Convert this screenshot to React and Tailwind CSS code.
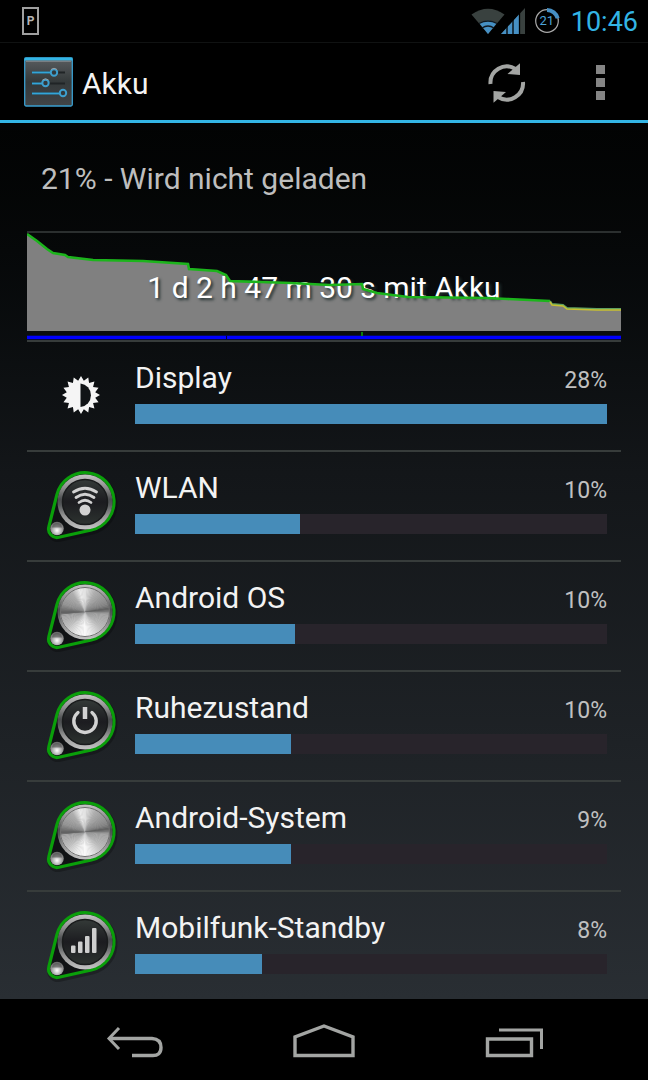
import React from "react";

const consumers = [
  { name: "Display", percent: 28, bar: 100, icon: "display" },
  { name: "WLAN", percent: 10, bar: 35, icon: "wifi" },
  { name: "Android OS", percent: 10, bar: 34, icon: "metal" },
  { name: "Ruhezustand", percent: 10, bar: 33, icon: "power" },
  { name: "Android-System", percent: 9, bar: 33, icon: "metal" },
  { name: "Mobilfunk-Standby", percent: 8, bar: 27, icon: "signal" },
];

const greenLine =
  "0,1 10,8 20,16 26,20 38,22 41,24 66,27 116,28 161,31 162,36 190,38 199,42 203,48 263,50 303,52 335,51 336,56 350,60 381,64 460,65 480,66 523,68";
const yellowLine = "523,68 525,71 536,72 540,75 570,76 594,76";

// brightness of the brushed metal by angle, clockwise from the top
const metalStops = [
  [0, 225],
  [25, 175],
  [70, 135],
  [82, 95],
  [95, 165],
  [135, 190],
  [165, 235],
  [180, 250],
  [200, 235],
  [230, 190],
  [262, 165],
  [266, 90],
  [290, 150],
  [325, 175],
  [345, 235],
  [360, 225],
];

function brightness(angle) {
  const i = metalStops.findIndex(([a]) => a > angle);
  const [a0, b0] = metalStops[i - 1];
  const [a1, b1] = metalStops[i];
  return Math.round(b0 + ((b1 - b0) * (angle - a0)) / (a1 - a0));
}

const wedges = Array.from({ length: 90 }, (_, i) => {
  const from = ((i * 4 - 90) * Math.PI) / 180;
  const to = ((i * 4 - 85) * Math.PI) / 180;
  const point = (t) => `${(38 + 25 * Math.cos(t)).toFixed(2)} ${(32 + 25 * Math.sin(t)).toFixed(2)}`;
  const b = brightness(i * 4 + 1);
  return { d: `M38 32L${point(from)}L${point(to)}Z`, fill: `rgb(${b},${b},${b})` };
});

function Glyph({ kind }) {
  if (kind === "metal") {
    return (
      <g>
        {wedges.map((w) => (
          <path key={w.d} d={w.d} fill={w.fill} />
        ))}
        <circle cx="38" cy="32" r="24.5" fill="none" stroke="#6f6f6f" strokeWidth="1" />
      </g>
    );
  }
  return (
    <g>
      <circle cx="38" cy="32" r="22.5" fill="url(#disc)" stroke="#191b1c" strokeWidth="1.5" />
      {kind === "wifi" && (
        <g fill="none" stroke="#d2d2d2" strokeWidth="2.8" strokeLinecap="round">
          <path d="M26.5 22Q38 14.5 49.5 22" />
          <path d="M29 27.500Q38 21 47 27.500" />
          <path d="M32 32.500Q38 28 44 32.500" />
          <circle cx="38" cy="40" r="5.500" fill="#d2d2d2" stroke="none" />
        </g>
      )}
      {kind === "power" && (
        <g fill="none" stroke="#d2d2d2" strokeWidth="3.400" strokeLinecap="round">
          <path d="M31 22.500A11.200 11.200 0 1 0 45 22.500" />
          <path d="M38 17V29" strokeWidth="4.500" strokeLinecap="butt" />
        </g>
      )}
      {kind === "signal" && (
        <g fill="#cfcfcf">
          <rect x="24" y="35.500" width="4.500" height="7.500" rx="1" />
          <rect x="31" y="31.500" width="4.500" height="11.500" rx="1" />
          <rect x="38" y="26" width="4.500" height="17" rx="1" />
          <rect x="45" y="18" width="4.500" height="25" rx="1" />
        </g>
      )}
    </g>
  );
}

function ConsumerIcon({ kind }) {
  if (kind === "display") {
    const points = Array.from({ length: 32 }, (_, i) => {
      const r = i % 2 === 0 ? 19 : 14.5;
      const t = (i * Math.PI) / 16;
      return `${(34 + r * Math.sin(t)).toFixed(2)},${(35 - r * Math.cos(t)).toFixed(2)}`;
    }).join(" ");
    return (
      <svg viewBox="0 0 68 70" className="h-[70px] w-[68px] shrink-0" aria-hidden="true">
        <polygon points={points} fill="#f5f5f5" />
        <path d="M33.500 23.500A11.500 11.800 0 0 1 33.500 47Z" fill="#111416" />
      </svg>
    );
  }
  return (
    <svg viewBox="0 0 68 70" className="h-[70px] w-[68px] shrink-0 overflow-visible" aria-hidden="true">
      <defs>
        <linearGradient id="ring" x1="0" y1="0" x2="0" y2="1">
          <stop offset="0" stopColor="#c4c4c4" />
          <stop offset="0.25" stopColor="#8c8c8c" />
          <stop offset="0.45" stopColor="#4a4c4e" />
          <stop offset="0.55" stopColor="#55585a" />
          <stop offset="0.75" stopColor="#949494" />
          <stop offset="1" stopColor="#c4c4c4" />
        </linearGradient>
        <linearGradient id="disc" x1="0" y1="0" x2="0" y2="1">
          <stop offset="0" stopColor="#343a38" />
          <stop offset="0.5" stopColor="#1c1c20" />
          <stop offset="1" stopColor="#2d3330" />
        </linearGradient>
        <radialGradient id="rivet" cx="0.5" cy="0.65" r="0.6">
          <stop offset="0" stopColor="#ffffff" />
          <stop offset="0.5" stopColor="#b4b4b4" />
          <stop offset="1" stopColor="#6a6a6a" />
        </radialGradient>
      </defs>
      <path
        d="M9.900 24.600A29 29 0 1 1 44.400 60L11.900 67.300A8.500 8.500 0 0 1 1.800 56.900Z"
        fill="none"
        stroke="#000"
        strokeOpacity="0.25"
        strokeWidth="5"
        transform="translate(1 2)"
      />
      <path
        d="M9.900 24.600A29 29 0 1 1 44.400 60L11.900 67.300A8.500 8.500 0 0 1 1.800 56.900Z"
        fill="#101214"
        stroke="#0a9f0a"
        strokeWidth="3.200"
      />
      <circle cx="38" cy="32" r="27.500" fill="url(#ring)" />
      <circle cx="10" cy="58.500" r="6.800" fill="url(#rivet)" />
      <path d="M5 57.500A5 4.500 0 0 1 15 57.500Z" fill="#3d3d3d" opacity="0.5" />
      <Glyph kind={kind} />
    </svg>
  );
}

function StatusBar() {
  return (
    <div className="flex h-[43px] shrink-0 items-center border-b border-[#101212] pl-[22px] pr-[10px]">
      <div className="flex h-7 w-[17px] items-center justify-center border-2 border-[#a0a0a0] text-xs font-bold text-[#b4b4b4]">
        P
      </div>
      <div className="ml-auto flex items-center">
        <svg viewBox="0 0 34 26" className="h-[26px] w-[34px]" role="img" aria-label="WLAN">
          <path d="M17 26L0.500 6.500Q17 -5 33.500 6.500Z" fill="#39413f" />
          <path d="M17 26L8.500 15.500Q17 9.500 25.500 15.500Z" fill="#4690c4" />
          <path d="M8 15.500Q17 10.500 26 15.500M11 20Q17 16 23 20" fill="none" stroke="#101820" strokeWidth="1.300" />
        </svg>
        <svg viewBox="0 0 24 26" className="-ml-1 h-[26px] w-6" role="img" aria-label="Mobilfunk">
          <path d="M0 26L24 0V26Z" fill="#39413f" />
          <path d="M0 26L18 6.500V26Z" fill="#4690c4" />
          <path d="M6 12V26M12 6V26M18.500 0V26" stroke="#000" strokeWidth="1.300" />
        </svg>
        <div className="ml-2 grid size-7 place-items-center">
          <svg viewBox="0 0 28 28" className="size-7 [grid-area:1/1]" aria-hidden="true">
            <circle cx="14" cy="14" r="11.300" fill="none" stroke="#a8a8a8" strokeWidth="1.200" />
            <path d="M14 3A11 11 0 0 1 24.700 11.300" fill="none" stroke="#4690c4" strokeWidth="4" />
          </svg>
          <span className="text-[13px] text-[#4da3d8] [grid-area:1/1]">21</span>
        </div>
        <span className="ml-[10px] pt-[2px] text-[27px] leading-8 text-[#33b5e5]">10:46</span>
      </div>
    </div>
  );
}

function ActionBar() {
  return (
    <header className="flex h-20 shrink-0 items-center border-b-[3px] border-[#33b5e5] pl-6 pr-[43px]">
      <svg viewBox="0 0 49 50" className="h-[50px] w-[49px]" aria-hidden="true">
        <defs>
          <linearGradient id="tile" x1="0" y1="0" x2="0" y2="1">
            <stop offset="0" stopColor="#5a5d60" />
            <stop offset="0.5" stopColor="#34393a" />
            <stop offset="1" stopColor="#414446" />
          </linearGradient>
        </defs>
        <rect x="0.700" y="1" width="47.600" height="48" rx="1.500" fill="url(#tile)" stroke="#3a9fd0" strokeWidth="1.300" />
        <path d="M0.500 2H48.500" stroke="#33b5e5" strokeWidth="3" />
        <path d="M2 4.200H47" stroke="#8a9296" strokeWidth="1" />
        <path d="M8 15.500H41M8 26.500H41M8 36.500H41" stroke="#202426" strokeWidth="2" />
        <path d="M8 15.500H27M8 26.500H18M8 36.500H36" stroke="#33a5d8" strokeWidth="1.800" />
        <g fill="#33383a" stroke="#3d9fce" strokeWidth="2">
          <circle cx="30" cy="15.500" r="3.200" />
          <circle cx="21.500" cy="26" r="3.200" />
          <circle cx="39" cy="36" r="3.200" />
        </g>
        <path d="M27 12.500Q30 10 33 12.500M18.500 23Q21.500 20.500 24.500 23" fill="none" stroke="#9a9da0" strokeWidth="1" />
      </svg>
      <h1 className="ml-[9px] pt-1 text-[30px] leading-9 text-[#f3f3f3]">Akku</h1>
      <div className="ml-auto flex items-center gap-16 pt-[2px]">
        <button type="button" aria-label="Aktualisieren">
          <svg viewBox="0 0 38 40" className="h-10 w-[38px]">
            <g fill="none" stroke="#a3a5a3" strokeWidth="4">
              <path d="M2.500 21A16.300 16.300 0 0 1 27.500 6" />
              <path d="M35 19A16.300 16.300 0 0 1 10 34" />
            </g>
            <path d="M32 0.300V12L19.500 11Z" fill="#a3a5a3" />
            <path d="M5.500 39.700V28L18 29Z" fill="#a3a5a3" />
          </svg>
        </button>
        <button type="button" aria-label="Weitere Optionen" className="flex flex-col items-end gap-1 pl-1.5">
          <span className="size-[9px] bg-[#858585]" />
          <span className="size-[9px] bg-[#858585]" />
          <span className="size-[9px] bg-[#858585]" />
        </button>
      </div>
    </header>
  );
}

function HistoryChart() {
  return (
    <a href="#history" className="mx-[27px] grid items-center border-t-2 border-[#2b2f2f]">
      <svg viewBox="0 0 594 107" preserveAspectRatio="none" className="h-[107px] w-full [grid-area:1/1]" aria-hidden="true">
        <polygon points={`${greenLine} ${yellowLine} 594,98 0,98`} fill="#808080" />
        <rect x="0" y="102.700" width="594" height="3.500" fill="#0000ff" />
        <rect x="199" y="102.700" width="1" height="3.500" fill="#000040" />
        <rect x="334" y="99" width="2" height="4" fill="#0b7f0b" />
      </svg>
      <span className="pt-[2px] text-center text-[30px] leading-9 text-white [grid-area:1/1] [text-shadow:2px_2px_3px_#223030]">
        1 d 2 h 47 m 30 s mit Akku
      </span>
      <svg viewBox="0 0 594 107" preserveAspectRatio="none" className="h-[107px] w-full [grid-area:1/1]" aria-hidden="true">
        <polyline points={greenLine} fill="none" stroke="#1cb41c" strokeWidth="2.600" />
        <polyline points={yellowLine} fill="none" stroke="#5fa05f" strokeWidth="2" />
        <polyline points={yellowLine} fill="none" stroke="#c8c030" strokeWidth="1.500" transform="translate(0 1)" />
      </svg>
    </a>
  );
}

function ConsumerRow({ item }) {
  return (
    <li className="h-[110px] border-t-2 border-[#373c3b]">
      <a href={`#${item.name}`} className="flex gap-5 pl-5 pr-[14px] pt-[18px]">
        <ConsumerIcon kind={item.icon} />
        <div className="flex-1">
          <div className="flex items-baseline justify-between">
            <span className="text-[30px] leading-9 text-[#f3f3f3]">{item.name}</span>
            <span className="text-[23px] leading-9 text-[#c0c0c0]">{item.percent}%</span>
          </div>
          <div className="mt-[5px] h-5 bg-[#28242b]">
            <div className="h-full bg-[#468cb9]" style={{ width: `${item.bar}%` }} />
          </div>
        </div>
      </a>
    </li>
  );
}

function NavBar() {
  return (
    <nav className="z-10 flex h-[81px] shrink-0 items-center justify-between bg-black px-[105px] pt-[2px]">
      <button type="button" aria-label="Zurück">
        <svg viewBox="0 0 60 36" className="h-9 w-[60px]" fill="none" stroke="#a3a5a3" strokeWidth="3">
          <path d="M14 5L4 15.500L14 26" />
          <path d="M4 15.500H47Q56 16 56 24.500Q56 33 47 32.500H27" strokeWidth="3.400" />
        </svg>
      </button>
      <button type="button" aria-label="Startseite">
        <svg viewBox="0 0 60 36" className="h-9 w-[60px] overflow-visible" fill="none" stroke="#a3a5a3" strokeWidth="3.400">
          <path d="M1 32.500V14L30 3L59 14V32.500Z" />
        </svg>
      </button>
      <button type="button" aria-label="Letzte Apps">
        <svg viewBox="0 0 60 36" className="h-9 w-[60px]" fill="none" stroke="#a3a5a3" strokeWidth="3.400">
          <path d="M4.500 16H48.500V32.500H4.500Z" />
          <path d="M16 7H58.500V26" strokeWidth="3" />
        </svg>
      </button>
    </nav>
  );
}

export default function App() {
  return (
    <div className="flex h-screen flex-col bg-black font-['Roboto',sans-serif]">
      <StatusBar />
      <ActionBar />
      <main className="min-h-0 flex-1 overflow-hidden bg-linear-to-b from-[#020303] via-[#131619] via-40% to-[#292e33]">
        <p className="px-[41px] pb-[34px] pt-[38px] text-[30px] leading-9 text-[#bebebe]">21% - Wird nicht geladen</p>
        <HistoryChart />
        <ul className="mx-[27px]">
          {consumers.map((item) => (
            <ConsumerRow key={item.name} item={item} />
          ))}
        </ul>
      </main>
      <NavBar />
    </div>
  );
}
